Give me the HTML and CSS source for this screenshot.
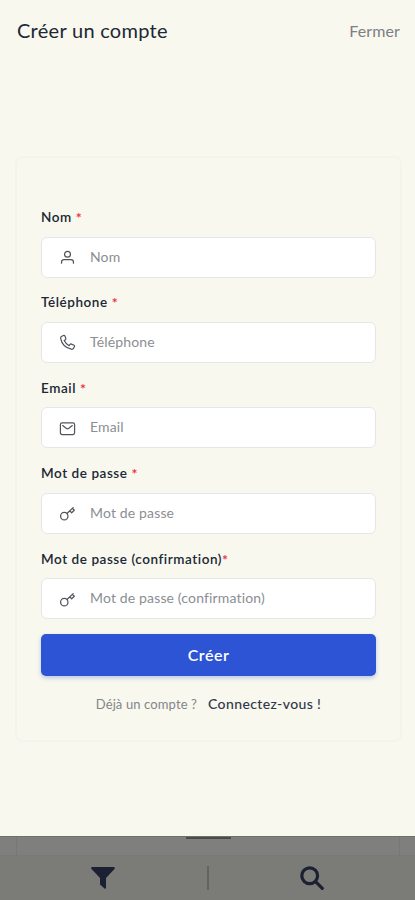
FILE: index.html
```html
<!DOCTYPE html>
<html lang="fr">
<head>
<meta charset="utf-8">
<meta name="viewport" content="width=device-width, initial-scale=1">
<title>Créer un compte</title>
<link rel="stylesheet" href="styles.css">
</head>
<body>
<svg class="defs" aria-hidden="true">
  <symbol id="user" viewBox="0 0 18 18"><circle cx="9" cy="5.6" r="3.1"/><path d="M2.700 15v-1.200q0-2.600 2.600-2.600h7.400q2.600 0 2.600 2.600V15"/></symbol>
  <symbol id="phone" viewBox="0 0 18 18"><path d="M4.7 1.6 2.5 2.7Q1.5 3.3 1.8 5C2.9 10.600 7.200 14.900 13 16.100Q14.700 16.400 15.300 15.300L16.400 13.200Q16.700 12.400 15.900 11.900L13.100 10.700Q12.200 10.300 11.700 11.100L10.700 12.400C8.300 11.100 6.500 9.200 5.500 7L6.800 6.100Q7.600 5.500 7.200 4.600L6.200 2Q5.600 1.200 4.700 1.600Z"/></symbol>
  <symbol id="mail" viewBox="0 0 18 18"><rect x="1.500" y="3" width="15" height="12.400" rx="1.800"/><path d="m3.900 5.900 3.700 2.900q1.400 1 2.800 0l3.700-2.900"/></symbol>
  <symbol id="key" viewBox="0 0 18 18"><circle cx="5.600" cy="11.800" r="3.900"/><path d="m8.400 9 6.600-6.200M11.400 6.200l2 2 2.800-2.700-2-2"/></symbol>
</svg>
<main class="sheet">
  <header class="header">
    <h1 class="title">Créer un compte</h1>
    <a class="close">Fermer</a>
  </header>
  <form class="card">
    <div class="field">
      <label class="label"><span>Nom</span><b class="gap">*</b></label>
      <div class="input"><svg><use href="#user"/></svg><span>Nom</span></div>
    </div>
    <div class="field">
      <label class="label"><span>Téléphone</span><b class="gap">*</b></label>
      <div class="input"><svg><use href="#phone"/></svg><span>Téléphone</span></div>
    </div>
    <div class="field">
      <label class="label"><span>Email</span><b class="gap">*</b></label>
      <div class="input"><svg><use href="#mail"/></svg><span>Email</span></div>
    </div>
    <div class="field">
      <label class="label"><span>Mot de passe</span><b class="gap">*</b></label>
      <div class="input"><svg><use href="#key"/></svg><span>Mot de passe</span></div>
    </div>
    <div class="field">
      <label class="label"><span>Mot de passe (confirmation)</span><b>*</b></label>
      <div class="input"><svg><use href="#key"/></svg><span>Mot de passe (confirmation)</span></div>
    </div>
    <button class="submit" type="button">Créer</button>
    <p class="login"><span class="hint">Déjà un compte ?</span><a class="link">Connectez-vous !</a></p>
  </form>
</main>
<footer class="backdrop">
  <div class="peek"><i class="handle"></i></div>
  <nav class="toolbar">
    <a class="tool"><svg class="filter" viewBox="0 0 24 22"><path d="M1 0h22q1.400.6.500 1.900L15 11v10q-.4 1-1.500.4L9 17.600V11L.5 1.900Q-.4.600 1 0Z"/></svg></a>
    <i class="divider"></i>
    <a class="tool"><svg class="search" viewBox="0 0 24 24"><circle cx="9.700" cy="9.700" r="7.900"/><path d="m15.600 15.600 6.700 6.700"/></svg></a>
  </nav>
</footer>
</body>
</html>
```
FILE: styles.css
```css
* { box-sizing: border-box; }
body { margin: 0; height: 900px; display: flex; flex-direction: column; overflow: hidden; background: #f8f8ee; color: #202735; font-family: Lato, sans-serif; }
.defs { display: none; }
.sheet { height: 836px; flex: none; padding: 0 13px 0 15px; }
.header { height: 156px; padding: 16px 2px 0 2px; display: flex; justify-content: space-between; align-items: flex-start; }
.title { margin: 0; font-size: 20px; line-height: 28px; font-weight: 400; letter-spacing: .28px; white-space: nowrap; }
.close { font-size: 16px; line-height: 29px; color: #7c8084; letter-spacing: .1px; }
.card { height: 586px; padding: 48px 24px 0; border: 2px solid #f4f4ec; border-radius: 7px; }
.field { height: 85.4px; }
.label { display: flex; height: 30.6px; line-height: 23px; font-size: 13.5px; font-weight: 600; letter-spacing: .56px; white-space: nowrap; }
.label b { color: #ed3348; font-size: 14px; font-weight: 700; letter-spacing: 0; }
.label .gap { margin-left: 4px; }
.input { height: 41px; display: flex; align-items: center; padding: 0 0 2px 17px; background: #fff; border: 1px solid #e3e7eb; border-radius: 6px; font-size: 14px; color: #8b8e92; letter-spacing: .15px; white-space: nowrap; }
.input svg { width: 17px; height: 17px; margin: 3px 14px 0 0; fill: none; stroke: #50545a; stroke-width: 1.3; stroke-linejoin: round; stroke-linecap: round; }
.submit { display: block; width: 100%; height: 42px; margin: 1.500px 0 0; padding: 0; border: 0; border-radius: 5px; background: #2c54d4; color: #fff; font: 600 16px/42px Lato, sans-serif; letter-spacing: .5px; box-shadow: 0 2px 4px #2c54d44d; }
.login { margin: 15.500px 0 0; display: flex; justify-content: center; align-items: center; line-height: 24px; white-space: nowrap; }
.hint { font-size: 13px; color: #83868a; letter-spacing: .12px; margin-right: 11px; }
.link { font-size: 14px; font-weight: 500; color: #30374a; letter-spacing: .38px; }
.backdrop { height: 64px; background: #7b7c77; }
.peek { height: 20px; margin: 0; display: flex; justify-content: center; background: linear-gradient(90deg, transparent 16px, #777 16px, #777 17px, transparent 17px, transparent 399px, #777 399px, #777 400px, transparent 400px), #7f7f7e; border-top: 1px solid #6f706e; border-bottom: 1px solid #797a76; }
.handle { width: 45px; height: 2px; margin-left: 2px; background: #4b4c4a; }
.toolbar { height: 44px; display: flex; align-items: center; }
.tool { flex: 1; display: flex; justify-content: center; }
.divider { width: 2px; height: 24px; background: #62645f; }
.filter { width: 24px; height: 22px; margin-top: -1px; fill: #1b2033; }
.search { width: 24px; height: 24px; margin-top: -1px; fill: none; stroke: #1b2033; stroke-width: 3.200; stroke-linecap: round; }
```
